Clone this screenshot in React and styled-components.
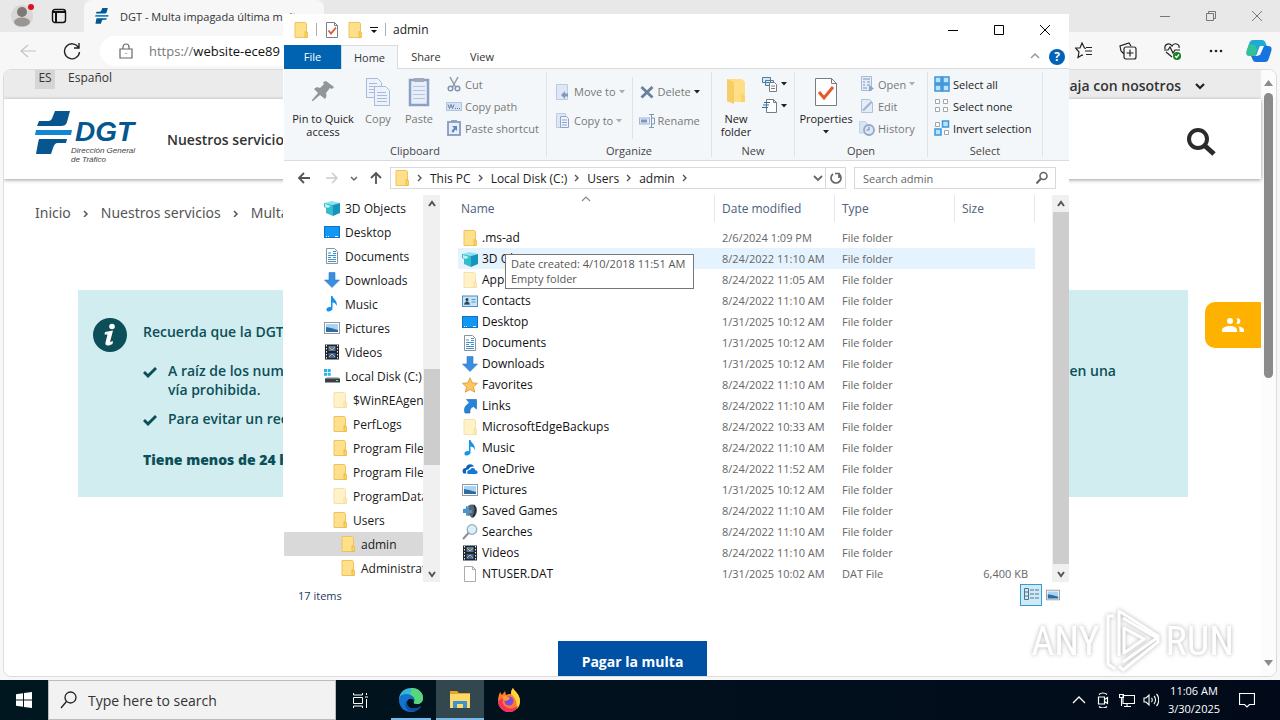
import React from 'react';
import styled, { createGlobalStyle } from 'styled-components';

const quickAccess = [
  { icon: 'cube', label: '3D Objects' },
  { icon: 'desktop', label: 'Desktop' },
  { icon: 'document', label: 'Documents' },
  { icon: 'download', label: 'Downloads' },
  { icon: 'music', label: 'Music' },
  { icon: 'picture', label: 'Pictures' },
  { icon: 'video', label: 'Videos' },
  { icon: 'disk', label: 'Local Disk (C:)' },
  { icon: 'folderPale', label: '$WinREAgent', level: 1 },
  { icon: 'folder', label: 'PerfLogs', level: 1 },
  { icon: 'folder', label: 'Program Files', level: 1 },
  { icon: 'folder', label: 'Program Files (x86)', level: 1 },
  { icon: 'folderPale', label: 'ProgramData', level: 1 },
  { icon: 'folder', label: 'Users', level: 1 },
  { icon: 'folder', label: 'admin', level: 2, selected: true },
  { icon: 'folder', label: 'Administrator', level: 2 },
];

const files = [
  { icon: 'folder', name: '.ms-ad', date: '2/6/2024 1:09 PM' },
  { icon: 'cube', name: '3D Objects', date: '8/24/2022 11:10 AM', hover: true },
  { icon: 'folderPale', name: 'AppData', date: '8/24/2022 11:05 AM' },
  { icon: 'contact', name: 'Contacts', date: '8/24/2022 11:10 AM' },
  { icon: 'desktop', name: 'Desktop', date: '1/31/2025 10:12 AM' },
  { icon: 'document', name: 'Documents', date: '1/31/2025 10:12 AM' },
  { icon: 'download', name: 'Downloads', date: '1/31/2025 10:12 AM' },
  { icon: 'star', name: 'Favorites', date: '8/24/2022 11:10 AM' },
  { icon: 'link', name: 'Links', date: '8/24/2022 11:10 AM' },
  { icon: 'folderPale', name: 'MicrosoftEdgeBackups', date: '8/24/2022 10:33 AM' },
  { icon: 'music', name: 'Music', date: '8/24/2022 11:10 AM' },
  { icon: 'cloud', name: 'OneDrive', date: '8/24/2022 11:52 AM' },
  { icon: 'picture', name: 'Pictures', date: '1/31/2025 10:12 AM' },
  { icon: 'games', name: 'Saved Games', date: '8/24/2022 11:10 AM' },
  { icon: 'search', name: 'Searches', date: '8/24/2022 11:10 AM' },
  { icon: 'video', name: 'Videos', date: '8/24/2022 11:10 AM' },
  { icon: 'blank', name: 'NTUSER.DAT', date: '1/31/2025 10:02 AM', type: 'DAT File', size: '6,400 KB' },
];

const art = {
  folder: (
    <>
      <path d="M2 .5h10.500l1 1v14H2z" fill="#ffe08a" stroke="#efc35a" />
      <path d="M12 9.500l2.500 1v5H12z" fill="#ffd257" stroke="#e8b84a" strokeWidth=".8" />
    </>
  ),
  folderPale: (
    <>
      <path d="M2 .5h10.500l1 1v14H2z" fill="#fff2c8" stroke="#f5e2a8" />
      <path d="M12 9.500l2.500 1v5H12z" fill="#ffedb4" stroke="#f2dc9a" strokeWidth=".8" />
    </>
  ),
  cube: (
    <>
      <path d="M0 3l8-2 8 2-5 3z" fill="#8ce5ee" />
      <path d="M0 3l9 2v11l-7-3V8l-2-1z" fill="#35bccb" />
      <path d="M9 5l7-2v10l-7 3z" fill="#1595bd" />
      <path d="M1 4l6 2-3 2-3-1z" fill="#baf2f5" />
    </>
  ),
  desktop: (
    <>
      <rect x=".5" y="2.500" width="15" height="11" fill="#1297f5" stroke="#0b74c9" />
      <path d="M2 12.500h1M4 12.500h1M11 12.500h3" stroke="#fff" />
    </>
  ),
  document: (
    <>
      <path d="M2.500.5h8l3 3v12h-11z" fill="#fff" stroke="#8a949e" />
      <path d="M4 5h3M9 3.500h3M9 5.500h3M4 7.500h8M4 9.500h3M9 9.500h3M4 11.500h8M4 13.500h8" stroke="#3a92cf" />
    </>
  ),
  download: <path d="M5 .5h6V8h4.500L8 15.500.5 8H5z" fill="#3a8ee0" stroke="#2b78c4" strokeWidth=".6" />,
  music: <path d="M7 0h1.500c.5 3 5.500 4.500 4 10-.5-2.500-2-3.500-4-3.500V13c-1 2.800-5.500 3.500-6 1-.3-2.200 2-3.400 4.500-2.800z" fill="#1493ea" />,
  picture: (
    <>
      <rect x=".5" y="2.500" width="15" height="11" fill="#fff" stroke="#8f99a3" />
      <rect x="2" y="4" width="12" height="8" fill="#a9d4f4" />
      <path d="M2 7l5 1 7 2v2H2z" fill="#2f6da0" />
    </>
  ),
  video: (
    <>
      <rect x="1" y=".5" width="14" height="15" fill="#20262e" />
      <path d="M2.500 1v14M13.500 1v14" stroke="#e8eef2" strokeDasharray="1.500 1.500" />
      <rect x="4.500" y="2" width="7" height="5" fill="#5579a8" />
      <rect x="4.500" y="9" width="7" height="5" fill="#3c63a6" />
      <path d="M5 3l3 3 3-3M5 13l3-3 3 3" stroke="#e0b63c" fill="none" />
    </>
  ),
  disk: (
    <>
      <path d="M0 1h3v3H0zM3.700 1h3v3h-3zM0 4.700h3v3H0zM3.700 4.700h3v3h-3z" fill="#2cb4e8" />
      <path d="M3 9h11l2 2H1z" fill="#b9bec3" />
      <rect x="1" y="10.500" width="15" height="4" fill="#3a3f44" />
      <path d="M12 12.500h2" stroke="#5cf05c" />
    </>
  ),
  contact: (
    <>
      <rect x=".5" y="3" width="15" height="10.500" fill="#c5e4fa" stroke="#4f8fc2" />
      <circle cx="5" cy="6.500" r="1.500" fill="#2f3f4c" />
      <path d="M2.500 11.500c0-4 5-4 5 0zM9.500 6.500h4M9.500 9h4" fill="#2f3f4c" stroke="#4678a0" strokeWidth=".8" />
    </>
  ),
  star: <path d="M8 .8l2.200 5 5.300.5-4 3.700 1.200 5.200L8 12.500l-4.700 2.700L4.500 10l-4-3.700 5.300-.5z" fill="#ffc65c" stroke="#d89438" strokeWidth=".8" />,
  link: <path d="M4.500 1.500h10V11l-3-2.500C8.500 9.500 7.500 12 8 15H3C1.500 10 3.500 7 7.500 5z" fill="#2386d8" stroke="#1767b0" strokeWidth=".6" />,
  cloud: (
    <>
      <path d="M1.500 12.500C-1 9 2 6.500 4 7c.5-4 6-5 8-1.500-3-.5-5 1-5.500 3C3.500 8 3.500 11 4.500 12.500z" fill="#0c62b8" />
      <path d="M6 13c-2-2 0-4.500 2-4 1-3 5-2.500 5.300.2 3 .3 3 3.500.7 3.800z" fill="#1479d6" />
    </>
  ),
  games: (
    <>
      <path d="M6 3c4-3 9-1 9 4 0 4-2 7-5 8l-3-3z" fill="#5c6670" />
      <path d="M1 6l3-.5V3l3 1v3h3v3H7v3l-3-.5V10H1z" fill="#4d94c9" />
      <path d="M12 2c2 4 1 9-1 12" stroke="#22282e" fill="none" strokeWidth="1.500" />
    </>
  ),
  search: (
    <>
      <circle cx="10" cy="5.500" r="4.800" fill="#d9f0fb" stroke="#8da9b8" strokeWidth="1.200" />
      <path d="M6.500 9L1 15" stroke="#8a8f94" strokeWidth="2" />
    </>
  ),
  blank: <path d="M2.500.5h8l3 3v12h-11zM10.500.5v3h3" fill="#fff" stroke="#a9adb0" />,
  checkDoc: (
    <>
      <path d="M2.500.5h8l3 3v12h-11zM10.500.5v3h3" fill="#fff" stroke="#7a7f85" />
      <path d="M4.500 8.500l2.500 3L12 5.500" fill="none" stroke="#e2572f" strokeWidth="1.800" />
    </>
  ),
  cut: (
    <>
      <path d="M4 1l5.500 10M12 1L6.500 11" stroke="#8e9cae" strokeWidth="1.500" fill="none" />
      <circle cx="4.500" cy="12.500" r="2.300" stroke="#8294b2" strokeWidth="1.500" fill="none" />
      <circle cx="11.500" cy="12.500" r="2.300" stroke="#8294b2" strokeWidth="1.500" fill="none" />
    </>
  ),
  copyPath: (
    <>
      <rect x=".5" y="4.500" width="15" height="8" fill="#d5e1f3" stroke="#b3c4df" />
      <path d="M2 6.500l1.500 4 1.500-4 1.500 4L8 6.500M9 10.500h1M11 10.500h1M13 10.500h1" stroke="#667fa8" fill="none" />
    </>
  ),
  shortcut: (
    <>
      <rect x="2" y="2" width="12" height="13" fill="#e8effa" stroke="#849bc4" strokeWidth="1.800" />
      <rect x="5" y="0" width="6" height="3" fill="#8ea3c4" />
      <path d="M6 6h5v5L9.500 9.500 7 13 5.500 11l2.500-3z" fill="#6584bf" />
    </>
  ),
  moveTo: (
    <>
      <path d="M1.500.5h11v15h-11z" fill="#dde7f6" stroke="#bdcbe2" />
      <path d="M6 11l4-4v2.500h3v3h-3V15z" fill="#8397bd" />
    </>
  ),
  copyTo: (
    <>
      <path d="M1.500.5h9v14h-9z" fill="#dde7f6" stroke="#bdcbe2" />
      <path d="M5.500 3.500h6l2 2v9h-8zM7 7h5M7 9.500h5M7 12h5" fill="#eef3fb" stroke="#8fa3c8" />
    </>
  ),
  remove: <path d="M2.500 3l11 10.500M13.500 3l-11 10.500" stroke="#6a7f9c" strokeWidth="2.800" />,
  rename: (
    <>
      <rect x=".5" y="5" width="10" height="6" fill="#dde7f6" stroke="#a4b6d6" />
      <path d="M2 8h6" stroke="#7e95c0" strokeWidth="3" />
      <path d="M10 1.500h5M12.500 1.500v13M10 14.500h5M13 5h2.500v6H13" stroke="#8296b8" fill="none" />
    </>
  ),
  newItem: (
    <>
      <path d="M.5 1.500h8v5h-8zM3.500 4.500h8v5h-8z" fill="#d8e9f6" stroke="#4d7f9d" />
      <path d="M7.500 6.500h5l2 2v7h-7zM9 10h4M9 12.500h4" fill="#fff" stroke="#777c82" />
    </>
  ),
  easyAccess: (
    <>
      <path d="M4.500 1.500h7l3 3v10h-10zM11.500 1.500v3h3" fill="#fff" stroke="#777c82" />
      <path d="M2 4.500h6M1 7h6M0 9.500h6" stroke="#2e6da4" strokeWidth="1.200" />
    </>
  ),
  openDoc: (
    <>
      <path d="M2.500.5h10v14h-10z" fill="#e4ecf8" stroke="#a8b9d6" />
      <path d="M4 3h7M4 6h2M8 6h3M4 9h2M8 9h3M4 12h4" stroke="#7f95c0" />
      <path d="M10 9l5 3.500-5 3z" fill="#8fa3cd" />
    </>
  ),
  edit: (
    <>
      <path d="M2.500 1.500h8l3 3v10h-11z" fill="#e4ecf8" stroke="#b0c0dc" />
      <path d="M4 12.500L12.500 4" stroke="#a0b2d4" strokeWidth="2.200" />
    </>
  ),
  history: (
    <>
      <path d="M.5 1.500h6l1.500 1.500v10H.5z" fill="#d8e3f3" stroke="#c3d1e6" />
      <circle cx="10" cy="10" r="5" fill="#dde7f6" stroke="#93a6ca" strokeWidth="1.800" />
      <path d="M10 7v3H7.500" fill="none" stroke="#6d83ae" />
    </>
  ),
  selectAll: (
    <>
      <path d="M1 1h6v6H1zM9 1h6v6H9zM1 9h6v6H1zM9 9h6v6H9z" fill="#bfe2fb" stroke="#3897e0" strokeWidth="1.500" />
      <path d="M8 0v16M0 8h16" stroke="#2885ce" />
    </>
  ),
  selectNone: <path d="M1.500 1.500h4v4h-4zM9.500 1.500h4v4h-4zM1.500 9.500h4v4h-4zM9.500 9.500h4v4h-4z" fill="#fff" stroke="#a1a6ab" />,
  invert: (
    <>
      <path d="M1.500 2.500h4v4h-4zM10.500 10.500h4v4h-4z" fill="#fff" stroke="#a1a6ab" />
      <path d="M8.500 1h6v6h-6zM1 9h6v6H1z" fill="#bfe2fb" stroke="#3897e0" strokeWidth="1.500" />
    </>
  ),
};

function Icon({ name, size = 16 }) {
  return (
    <svg width={size} height={size} viewBox="0 0 16 16" fill="none" aria-hidden="true">
      {art[name]}
    </svg>
  );
}

function Line({ d, size = 16, color = '#222', width = 1, box = 16 }) {
  return (
    <svg width={size} height={size} viewBox={`0 0 ${box} ${box}`} fill="none" stroke={color} strokeWidth={width} aria-hidden="true">
      <path d={d} />
    </svg>
  );
}

function Caret({ color = '#222' }) {
  return (
    <svg width="6" height="4" viewBox="0 0 6 4" aria-hidden="true">
      <path d="M0 0h6L3 3.500z" fill={color} />
    </svg>
  );
}

function Small({ icon, children, muted, caret }) {
  return (
    <SmallButton $muted={muted}>
      <Icon name={icon} />
      {children}
      {caret && <Caret color={caret === 'dark' ? '#222' : '#a9adb2'} />}
    </SmallButton>
  );
}

function DgtMark({ width, height }) {
  return (
    <svg width={width} height={height} viewBox="0 0 38 44" aria-hidden="true">
      <path d="M20 0h15l-3 11c-1 3-3 4-6 4H2l2-5h9c3 0 4-2 5-5z" fill="#07568f" />
      <path d="M1 19h36l-1 5H0z" fill="#1286d4" />
      <path d="M4 28h28l-1 4h-8c-3 0-4 2-5 5l-2 6H1l2-11z" fill="#07568f" />
    </svg>
  );
}

function Browser() {
  return (
    <BrowserWindow>
      <TabStrip>
        <IconButton aria-label="Profile">
          <svg width="24" height="24" viewBox="0 0 24 24">
            <circle cx="12" cy="12" r="11" fill="#d9d7d5" />
            <circle cx="12" cy="8" r="5" fill="#7d7976" />
            <ellipse cx="12" cy="18" rx="8" ry="4.500" fill="#9b9693" />
            <circle cx="21" cy="3" r="3" fill="#e0101f" />
          </svg>
        </IconButton>
        <IconButton aria-label="Tab actions">
          <svg width="16" height="16" viewBox="0 0 16 16" fill="none" stroke="#111" strokeWidth="1.400">
            <rect x="1.500" y="1.500" width="13" height="13" rx="2.500" />
            <path d="M1.500 4h13M5 4v10" strokeWidth="2" />
          </svg>
        </IconButton>
        <Tab>
          <DgtMark width={14} height={16} />
          DGT - Multa impagada última multa
        </Tab>
        <TabGap />
        <CaptionButton aria-label="Minimize browser"><Line d="M3 8.500h10" color="#777" /></CaptionButton>
        <CaptionButton aria-label="Restore browser">
          <Line d="M3.500 5.500h7v7h-7zM5.500 5.500v-2h7v7h-2" color="#777" />
        </CaptionButton>
        <CaptionButton aria-label="Close browser"><Line d="M3 3l10 10M13 3L3 13" color="#777" /></CaptionButton>
      </TabStrip>

      <Toolbar>
        <ToolButton aria-label="Back"><Line d="M9 3L2 9l7 6M2 9h15" size={18} box={18} color="#c4c4c4" width={1.2} /></ToolButton>
        <ToolButton aria-label="Reload"><Line d="M15.500 5.500A7.500 7.500 0 1 0 16.500 10M16 1v5h-5" size={18} box={18} width={1.400} /></ToolButton>
        <UrlBar>
          <Line d="M2 6h12v9H2zM5 6V4a3 3 0 0 1 6 0v2M7.500 10.500h1" color="#666" width={1.2} />
          <label htmlFor="url">https://</label>
          <input id="url" defaultValue="website-ece89" />
        </UrlBar>
        <ToolButton aria-label="Favorites">
          <Line d="M11 6.500L9.500 6 7 1 5 6H.5l3.500 4L3 15.500 7 13l1 .5M11 5.500h6M10 9h7M11 12.500h6" size={18} box={18} width={1.200} />
        </ToolButton>
        <ToolButton aria-label="Collections">
          <Line d="M5 12L2 9 1 4l9-3 2 3M7 5h8a2 2 0 0 1 2 2v8a2 2 0 0 1-2 2H7a2 2 0 0 1-2-2V7a2 2 0 0 1 2-2M11 7.500v7M7.500 11h7" size={18} box={18} width={1.200} />
        </ToolButton>
        <ToolButton aria-label="Browser essentials">
          <svg width="18" height="18" viewBox="0 0 18 18" fill="none" stroke="#222" strokeWidth="1.200">
            <path d="M9 15L3 10M2 7c-1-5 5-7 7-3 2-4 8-2 7 2M1 8h4l2-3 3 6 2-3h5" />
            <circle cx="14" cy="14" r="4" fill="#18801f" stroke="none" />
            <path d="M12 14l1.500 1.500L16 12.500" stroke="#fff" />
          </svg>
        </ToolButton>
        <ToolButton aria-label="Settings">
          <svg width="18" height="18" viewBox="0 0 18 18" fill="#222">
            <circle cx="4" cy="9" r="1.300" /><circle cx="9" cy="9" r="1.300" /><circle cx="14" cy="9" r="1.300" />
          </svg>
        </ToolButton>
        <ToolButton aria-label="Copilot">
          <svg width="26" height="24" viewBox="0 0 26 24">
            <path d="M7 1h9c2 0 3 1 4 4l1 2h-5c-3 0-3 3-5 8-1 2-2 2-4 2H4c-4 0-4-3-3-6l2-6c1-3 2-4 4-4z" fill="#1fa9d8" />
            <path d="M3 5L1 11c-1 3-1 6 3 6h3c2 0 3-3 4-6L9 6z" fill="#33c298" />
            <path d="M19 23h-9c-2 0-3-1-4-4l-1-2h5c3 0 3-3 5-8 1-2 2-2 4-2h3c4 0 4 3 3 6l-2 6c-1 3-2 4-4 4z" fill="#1674e0" />
            <path d="M11 15l3-8h4l-4 9-4 1z" fill="#fff" />
          </svg>
        </ToolButton>
      </Toolbar>

      <Viewport>
        <Site>
          <TopBand>
            <Lang>ES</Lang>
            <span>Español</span>
            <WorkLink href="#trabaja">
              Trabaja con nosotros
              <Line d="M2 4l4 4 4-4" size={12} box={12} width={2.200} />
            </WorkLink>
          </TopBand>
          <SiteHeader>
            <Logo href="#inicio" aria-label="DGT">
              <DgtMark width={38} height={44} />
              <LogoText>
                <b>DGT</b>
                <small>Dirección General</small>
                <small>de Tráfico</small>
              </LogoText>
            </Logo>
            <ServiceLink href="#servicios">Nuestros servicios</ServiceLink>
            <IconButton aria-label="Buscar">
              <svg width="30" height="30" viewBox="0 0 30 30" fill="none" stroke="#2b2b2b">
                <circle cx="12" cy="12" r="9" strokeWidth="4" />
                <path d="M18 18l10 9" strokeWidth="5" />
              </svg>
            </IconButton>
          </SiteHeader>
          <Crumbs>
            <a href="#inicio">Inicio</a>
            <Line d="M2 2l3 3-3 3" size={8} box={8} color="#555" width={1.500} />
            <a href="#servicios">Nuestros servicios</a>
            <Line d="M2 2l3 3-3 3" size={8} box={8} color="#555" width={1.500} />
            <span>Multas</span>
          </Crumbs>
          <Notice>
            <svg width="34" height="34" viewBox="0 0 34 34" aria-hidden="true">
              <circle cx="17" cy="17" r="17" fill="#0c4f58" />
              <circle cx="19" cy="8.500" r="2.800" fill="#fff" />
              <path d="M12 14l8-1.500-3 11.500 3-1-.5 3c-3 2-8 2.500-7-1.500l2-8h-3z" fill="#fff" />
            </svg>
            <NoticeText>
              <p>Recuerda que la DGT nunca</p>
              <ul>
                <li>
                  <Line d="M1 7l4 4 8-8" size={14} box={14} color="#0c4f58" width={3} />
                  <NoticeItem>
                    <Split><span>A raíz de los numerosos</span><span>en una</span></Split>
                    vía prohibida.
                  </NoticeItem>
                </li>
                <li>
                  <Line d="M1 7l4 4 8-8" size={14} box={14} color="#0c4f58" width={3} />
                  <NoticeItem>Para evitar un recargo</NoticeItem>
                </li>
              </ul>
              <strong>Tiene menos de 24 horas</strong>
            </NoticeText>
          </Notice>
          <PayButton>Pagar la multa</PayButton>
          <PeopleTab aria-label="Atención">
            <svg width="24" height="24" viewBox="0 0 24 24" fill="#fff">
              <path d="M16.500 11a2.900 2.900 0 1 0 0-5.800c-.3 0-.6 0-.9.100a5 5 0 0 1 0 5.500c.3.100.6.200.9.200zM9 11a3 3 0 1 0 0-6 3 3 0 0 0 0 6zM9 13c-3 0-8 1.300-8 4v2h15v-2c0-2.700-4-4-7-4zM17 13.200c1.200.9 1.500 2.300 1.500 3.800v2H23v-2c0-2.300-3.500-3.500-6-3.800z" />
            </svg>
          </PeopleTab>
        </Site>
        <PageScroll>
          <svg width="9" height="6" viewBox="0 0 9 6"><path d="M0 6h9L4.500 0z" fill="#8b8b8b" /></svg>
          <PageThumb />
          <svg width="9" height="6" viewBox="0 0 9 6"><path d="M0 0h9L4.500 6z" fill="#8b8b8b" /></svg>
        </PageScroll>
      </Viewport>
    </BrowserWindow>
  );
}

function Ribbon() {
  return (
    <RibbonBar>
      <Group $width={263}>
        <GroupBody>
          <BigButton $width={74}>
            <svg width="24" height="32" viewBox="0 0 24 32">
              <path d="M15 5l8 6-2 2-2-1-4 5c1 3 0 5-1 6l-5-4-7 6-1 0 0-1 6-7-4-4c2-2 4-2 6-1l4-4-1-2z" fill="#8f9897" />
            </svg>
            Pin to Quick access
          </BigButton>
          <BigButton $width={36} $muted>
            <svg width="26" height="32" viewBox="0 0 26 32" fill="#edf3fc" stroke="#a9b9d6">
              <path d="M1.500 2.500h11l4 4v15h-15z" />
              <path d="M4 7.500h8M4 10.500h8M4 13.500h8M4 16.500h8" />
              <path d="M9.500 10.500h11l4 4v15h-15z" />
              <path d="M12 16.500h9M12 19.500h10M12 22.500h10M12 25.500h10" />
            </svg>
            Copy
          </BigButton>
          <BigButton $width={46} $muted>
            <svg width="22" height="32" viewBox="0 0 22 32">
              <rect x="2" y="4" width="18" height="25" fill="#e7eefa" stroke="#8ba0c6" strokeWidth="2.500" />
              <rect x="6" y="2" width="10" height="4" fill="#a0a9b8" />
              <path d="M5 10.500h12M5 14.500h12M5 18.500h12M5 22.500h12" stroke="#b6c5df" />
            </svg>
            Paste
          </BigButton>
          <SmallStack>
            <Small icon="cut" muted>Cut</Small>
            <Small icon="copyPath" muted>Copy path</Small>
            <Small icon="shortcut" muted>Paste shortcut</Small>
          </SmallStack>
        </GroupBody>
        <GroupName>Clipboard</GroupName>
      </Group>
      <Group $width={165}>
        <GroupBody>
          <SmallStack $tall>
            <Small icon="moveTo" muted caret="light">Move to</Small>
            <Small icon="copyTo" muted caret="light">Copy to</Small>
          </SmallStack>
          <Divider />
          <SmallStack $tall>
            <Small icon="remove" muted caret="dark">Delete</Small>
            <Small icon="rename" muted>Rename</Small>
          </SmallStack>
        </GroupBody>
        <GroupName>Organize</GroupName>
      </Group>
      <Group $width={83}>
        <GroupBody>
          <BigButton $width={44}>
            <svg width="24" height="32" viewBox="0 0 24 32">
              <path d="M3 3h15l3 3v20H3z" fill="#ffdf85" />
              <path d="M3 3l7 3v22l-7-3z" fill="#f6cd66" />
              <path d="M17 17l4 3v6h-4z" fill="#f9d36c" />
            </svg>
            New folder
          </BigButton>
          <SmallStack>
            <Small icon="newItem" caret="dark" />
            <Small icon="easyAccess" caret="dark" />
          </SmallStack>
        </GroupBody>
        <GroupName>New</GroupName>
      </Group>
      <Group $width={133}>
        <GroupBody>
          <BigButton $width={58}>
            <svg width="24" height="32" viewBox="0 0 24 32">
              <path d="M1.500 2.500h16l5 5v22h-21zM17.500 2.500v5h5" fill="#fff" stroke="#777d83" />
              <path d="M5 16l5 6 9-11" fill="none" stroke="#e25b2c" strokeWidth="3" />
            </svg>
            Properties
            <Caret />
          </BigButton>
          <SmallStack>
            <Small icon="openDoc" muted caret="light">Open</Small>
            <Small icon="edit" muted>Edit</Small>
            <Small icon="history" muted>History</Small>
          </SmallStack>
        </GroupBody>
        <GroupName>Open</GroupName>
      </Group>
      <Group $width={115}>
        <GroupBody>
          <SmallStack>
            <Small icon="selectAll">Select all</Small>
            <Small icon="selectNone">Select none</Small>
            <Small icon="invert">Invert selection</Small>
          </SmallStack>
        </GroupBody>
        <GroupName>Select</GroupName>
      </Group>
    </RibbonBar>
  );
}

function Scroller({ before, thumb }) {
  return (
    <ScrollTrack>
      <ScrollArrow aria-label="Scroll up"><Line d="M1 6l3-4 3 4" size={8} box={8} color="#555" width={2} /></ScrollArrow>
      <ScrollSpace $size={before} />
      <ScrollThumb $size={thumb} />
      <ScrollRest />
      <ScrollArrow aria-label="Scroll down"><Line d="M1 2l3 4 3-4" size={8} box={8} color="#555" width={2} /></ScrollArrow>
    </ScrollTrack>
  );
}

function Explorer() {
  return (
    <ExplorerWindow>
      <TitleBar>
        <Icon name="folder" />
        <TitleRule />
        <Icon name="checkDoc" />
        <Icon name="folder" />
        <svg width="8" height="8" viewBox="0 0 8 8" aria-hidden="true">
          <path d="M0 1h8v1H0zM1 4h6L4 7z" fill="#111" />
        </svg>
        <TitleRule />
        <span>admin</span>
        <TabGap />
        <CaptionButton aria-label="Minimize"><Line d="M3 8.500h10" color="#000" /></CaptionButton>
        <CaptionButton aria-label="Maximize"><Line d="M3.500 3.500h9v9h-9z" color="#000" /></CaptionButton>
        <CaptionButton aria-label="Close"><Line d="M3 3l10 10M13 3L3 13" color="#000" /></CaptionButton>
      </TitleBar>
      <RibbonTabs>
        <RibbonTab $kind="file">File</RibbonTab>
        <RibbonTab $kind="active">Home</RibbonTab>
        <RibbonTab>Share</RibbonTab>
        <RibbonTab>View</RibbonTab>
        <TabGap />
        <Line d="M1 6l4-4 4 4" size={10} box={10} color="#999" width={1.500} />
        <Help aria-label="Help">?</Help>
      </RibbonTabs>
      <Ribbon />

      <AddressRow>
        <NavButton aria-label="Back"><Line d="M14 8H3M8 3L3 8l5 5" color="#555" width={1.800} /></NavButton>
        <NavButton aria-label="Forward"><Line d="M2 8h11M8 3l5 5-5 5" color="#ccc" width={1.500} /></NavButton>
        <NavButton aria-label="Recent" $narrow><Line d="M1 3l3 3 3-3" size={8} box={8} color="#666" width={1.500} /></NavButton>
        <NavButton aria-label="Up"><Line d="M8 14V3M3 8l5-5 5 5" color="#555" width={1.800} /></NavButton>
        <PathBox>
          <Icon name="folder" />
          {['This PC', 'Local Disk (C:)', 'Users', 'admin'].map((part) => (
            <React.Fragment key={part}>
              <Line d="M2 1l3 3-3 3" size={8} box={8} color="#555" width={1.400} />
              <span>{part}</span>
            </React.Fragment>
          ))}
          <Line d="M2 1l3 3-3 3" size={8} box={8} color="#555" width={1.400} />
          <TabGap />
          <Line d="M1 3l4 4 4-4" size={10} box={10} color="#666" width={1.800} />
          <Refresh aria-label="Refresh"><Line d="M5 4a5 5 0 1 0 6 0M11 8V3.500H7" color="#666" width={1.700} /></Refresh>
        </PathBox>
        <SearchBox>
          <input aria-label="Search admin" placeholder="Search admin" />
          <svg width="14" height="14" viewBox="0 0 14 14" fill="none" stroke="#666">
            <circle cx="8.500" cy="5" r="3.500" strokeWidth="1.600" />
            <path d="M6 7.500L1.500 12.500" strokeWidth="2" />
          </svg>
        </SearchBox>
      </AddressRow>

      <Panes>
        <Tree>
          {quickAccess.map((item) => (
            <TreeItem key={item.label} $level={item.level || 0} $selected={item.selected}>
              <Icon name={item.icon} />
              <span>{item.label}</span>
            </TreeItem>
          ))}
        </Tree>
        <Scroller before={157} thumb={96} />
        <FileArea>
          <FileTable>
            <colgroup>
              <col width="257" />
              <col width="120" />
              <col width="120" />
              <col width="80" />
            </colgroup>
            <thead>
              <tr>
                <th>
                  Name
                  <SortMark><Line d="M1 6l4-4 4 4" size={10} box={10} color="#888" width={1.200} /></SortMark>
                </th>
                <th>Date modified</th>
                <th>Type</th>
                <th>Size</th>
              </tr>
            </thead>
            <tbody>
              {files.map((file) => (
                <FileRow key={file.name} $hover={file.hover}>
                  <td>
                    <FileName>
                      <Icon name={file.icon} />
                      {file.name}
                    </FileName>
                  </td>
                  <td>{file.date}</td>
                  <td>{file.type || 'File folder'}</td>
                  <td>{file.size}</td>
                </FileRow>
              ))}
            </tbody>
          </FileTable>
          <Tip role="tooltip">
            Date created: 4/10/2018 11:51 AM
            <br />
            Empty folder
          </Tip>
        </FileArea>
        <Scroller before={0} thumb={352} />
      </Panes>

      <StatusBar>
        <span>17 items</span>
        <TabGap />
        <ViewButton $on aria-label="Details view">
          <Line d="M2.500 2.500h4v11h-4zM2.500 6h4M2.500 10h4M8 4h4M13 4h4M8 8h4M13 8h4M8 12h4M13 12h4" size={18} box={18} color="#587284" />
        </ViewButton>
        <ViewButton aria-label="Thumbnail view"><Icon name="picture" size={14} /></ViewButton>
      </StatusBar>
    </ExplorerWindow>
  );
}

function Taskbar() {
  return (
    <TaskRow>
      <TaskButton aria-label="Start">
        <svg width="16" height="16" viewBox="0 0 16 16" fill="#fff">
          <path d="M0 2.200L7 1.200v6.300H0zM8 1.100L16 0v7.500H8zM0 8.500h7v6.300l-7-1zM8 8.500h8V16l-8-1.100z" />
        </svg>
      </TaskButton>
      <TaskSearch>
        <svg width="18" height="18" viewBox="0 0 18 18" fill="none" stroke="#222" strokeWidth="1.300">
          <circle cx="11.500" cy="6.500" r="5.500" />
          <path d="M7.500 10.500L2 17" />
        </svg>
        <input aria-label="Type here to search" placeholder="Type here to search" />
      </TaskSearch>
      <TaskButton aria-label="Task view">
        <Line d="M1.500 1v2h9V1M1.500 5.500h9v6h-9zM1.500 16v-2h9v2M14.500 1v2M14.500 7v9M13 5h3" color="#fff" />
      </TaskButton>
      <AppGroup>
        <AppButton aria-label="Edge" $running>
          <svg width="26" height="26" viewBox="0 0 26 26">
            <path d="M1 13C1 5 7 1 13 1c8 0 12 5 12 10 0 4-3 6-6 6-2 0-4-1-3-2 2-3-1-6-4-6-5 0-7 4-6 8z" fill="#35b8d8" />
            <path d="M13 1c8 0 12 5 12 10 0 4-3 6-6 6-2 0-4-1-3-2 2-3-1-7-5-7 2-1 3-5 2-7z" fill="#5ad67a" />
            <path d="M1 13c0-4 3-6 8-6 5 0 8 4 7 7-1-3-6-3-7 1-1 6 7 9 14 4-2 4-6 6-10 6C6 25 1 20 1 13z" fill="#1573cf" />
            <path d="M9 15c-1 6 7 9 14 4-3 5-8 6-11 5.500C7 22 6 17 9 13z" fill="#0d4fa3" />
          </svg>
        </AppButton>
        <AppButton aria-label="File Explorer" $running $active>
          <svg width="22" height="20" viewBox="0 0 22 20">
            <path d="M1 1h7l2 2h11v6H1z" fill="#e8a620" />
            <path d="M1 4h20v14H1z" fill="#ffd868" />
            <path d="M4 18v-7h14v7h-4v-4H8v4z" fill="#3d93cf" />
          </svg>
        </AppButton>
        <AppButton aria-label="Firefox">
          <svg width="24" height="26" viewBox="0 0 24 26">
            <path d="M3 5l2 3 3-4 1 4c2-1 4-1 5-1 0-3 1-5 2-6 1 3 7 6 7 13 0 6-5 11-11 11S1 20 1 14c0-4 1-6 2-9z" fill="#ff7a2f" />
            <path d="M14 7c0-3 1-5 2-6 1 3 7 6 7 13 0 3-1 6-3 8 0-6-1-11-6-15z" fill="#ffd43b" />
            <path d="M1 14c0 6 5 11 11 11 4 0 8-2 9-6-5 4-12 3-15-2-1-2 0-4 0-6z" fill="#f5325b" />
            <circle cx="12" cy="14" r="4.500" fill="#7a4be0" />
            <path d="M6 9c3-1 4 1 7 2-1 2-3 2-4 3-2 0-3-2-3-5z" fill="#ff9a30" />
          </svg>
        </AppButton>
      </AppGroup>
      <TabGap />
      <TrayButton aria-label="Hidden icons"><Line d="M2 11l6-6 6 6" color="#fff" width={1.300} /></TrayButton>
      <TrayButton aria-label="Meet now">
        <Line d="M3.500 5h6v7h-6zM9.500 7.500l3-2v6l-3-2M4 2.500c2-2 6-2 8 0M4 14.500c2 2 6 2 8 0" color="#fff" width={1.200} />
      </TrayButton>
      <TrayButton aria-label="Network">
        <Line d="M4 3.500h11.500v8H4zM8 11.500v3M5 14.500h7M.5 2.500h4v3h-4zM2.500 6v8" color="#fff" width={1.100} />
      </TrayButton>
      <TrayButton aria-label="Volume">
        <Line d="M1 6h2l3-3v10l-3-3H1zM8.500 6c1 1 1 3 0 4M11 4c2 2 2 6 0 8M13.500 2c3 3 3 9 0 12" color="#fff" width={1.100} />
      </TrayButton>
      <Clock>
        <span>11:06 AM</span>
        <span>3/30/2025</span>
      </Clock>
      <NoteButton aria-label="Notifications"><Line d="M.5 1.500h15v11h-5L8 15l-2.500-2.500h-5z" color="#fff" width={1.200} /></NoteButton>
    </TaskRow>
  );
}

export default function App() {
  return (
    <Desktop>
      <GlobalStyle />
      <Browser />
      <Explorer />
      <Watermark>
        <span>ANY</span>
        <svg width="58" height="66" viewBox="0 0 58 66" fill="none" stroke="#fff" strokeWidth="3" strokeLinejoin="round">
          <path d="M10 8H4v48l7 5M15 48V3l39 25v6L19 62l-4-4" />
          <path d="M19 10l34 20-34 24M20 20l20 11-20 14z" />
        </svg>
        <span>RUN</span>
      </Watermark>
      <Taskbar />
    </Desktop>
  );
}

const GlobalStyle = createGlobalStyle`
  * {
    box-sizing: border-box;
  }

  body {
    margin: 0;
    font-family: 'Open Sans', 'Noto Sans', sans-serif;
    font-size: 12px;
    color: #1a1a1a;
  }

  button, input {
    font: inherit;
    color: inherit;
    border: 0;
    padding: 0;
    background: none;
  }

  input {
    min-width: 0;
    outline: none;
  }

  a {
    color: inherit;
    text-decoration: none;
  }

  svg {
    flex: none;
    display: block;
  }
`;

const Desktop = styled.div`
  position: relative;
  display: flex;
  flex-direction: column;
  height: 100vh;
  overflow: hidden;
`;

const BrowserWindow = styled.div`
  flex: 1;
  min-height: 0;
  display: flex;
  flex-direction: column;
  background: #f7f7f7;
`;

const TabStrip = styled.div`
  display: flex;
  height: 32px;
  padding-left: 10px;
  gap: 17px;
  align-items: center;
  background: #e8e8e8;
`;

const IconButton = styled.button`
  display: flex;
  align-items: center;
`;

const Tab = styled.div`
  display: flex;
  align-items: center;
  gap: 11px;
  align-self: stretch;
  width: 240px;
  padding-left: 11px;
  border-radius: 8px 8px 0 0;
  background: #f7f7f7;
  font-size: 11px;
  color: #333;
  white-space: nowrap;
`;

const TabGap = styled.div`
  flex: 1;
`;

const CaptionButton = styled.button`
  display: flex;
  align-items: center;
  justify-content: center;
  width: 46px;
  height: 30px;

  ${TabStrip} & + & {
    margin-left: -17px;
  }
`;

const Toolbar = styled.div`
  display: flex;
  align-items: center;
  height: 37px;
  padding-left: 6px;
`;

const ToolButton = styled.button`
  display: flex;
  align-items: center;
  justify-content: center;
  width: 44px;
  height: 30px;

  &:last-child {
    width: 42px;
  }
`;

const UrlBar = styled.div`
  flex: 1;
  display: flex;
  align-items: center;
  height: 30px;
  margin-left: 6px;
  padding-left: 18px;
  border-radius: 15px;
  background: #fff;
  font-size: 13px;

  label {
    margin-left: 15px;
    color: #777;
  }

  input {
    flex: 1;
    color: #111;
  }
`;

const Viewport = styled.div`
  flex: 1;
  min-height: 0;
  display: flex;
  margin: 0 3px 3px;
  border: 1px solid #dcdcdc;
  border-radius: 8px;
  background: #fff;
  overflow: hidden;
`;

const Site = styled.main`
  position: relative;
  flex: 1;
  min-width: 0;
  display: flex;
  flex-direction: column;
  font-size: 14px;
`;

const TopBand = styled.div`
  display: flex;
  align-items: flex-start;
  height: 29px;
  flex: none;
  padding: 0 55px 0 31px;
  gap: 13px;
  background: #ebebeb;
  font-size: 12px;
  line-height: 16px;
  color: #333;
`;

const Lang = styled.span`
  width: 20px;
  height: 19px;
  text-align: center;
  background: #d5d5d5;
`;

const WorkLink = styled.a`
  display: flex;
  align-items: center;
  gap: 13px;
  height: 32px;
  margin-left: auto;
  font-size: 14px;
  font-weight: 600;
`;

const SiteHeader = styled.header`
  display: flex;
  align-items: center;
  height: 80px;
  flex: none;
  padding: 0 45px 0 31px;
  background: #fff;
  box-shadow: 0 1px 4px rgba(0, 0, 0, 0.4);

  & > button {
    margin: 5px 0 0 auto;
  }
`;

const Logo = styled.a`
  display: flex;
  align-items: flex-start;
  height: 56px;
  width: 132px;
`;

const LogoText = styled.span`
  display: flex;
  flex-direction: column;
  margin-left: -2px;
  padding-top: 7px;
  font-family: 'Liberation Sans', sans-serif;
  font-style: italic;

  b {
    padding-left: 4px;
    font-size: 28px;
    line-height: 28px;
    color: #07568f;
  }

  small {
    font-size: 8px;
    line-height: 9px;
    color: #444;
    white-space: nowrap;
  }
`;

const ServiceLink = styled.a`
  font-weight: 600;
  color: #333;
`;

const Crumbs = styled.nav`
  display: flex;
  align-items: center;
  gap: 11px;
  padding: 24px 31px 0;
  font-family: 'Noto Sans', sans-serif;
  line-height: 20px;
  color: #555;
`;

const Notice = styled.section`
  display: flex;
  align-items: flex-start;
  gap: 16px;
  margin: 67px 73px 0 74px;
  padding: 28px 15px;
  height: 207px;
  flex: none;
  background: #d2edf0;
  color: #0c4f58;
  font-weight: 600;
  line-height: 19px;
`;

const NoticeText = styled.div`
  flex: 1;

  p {
    margin: 4px 0 20px;
  }

  ul {
    margin: 0 0 22px;
    padding: 0;
    list-style: none;
  }

  li {
    display: flex;
    gap: 11px;
    margin-bottom: 10px;
  }

  li svg {
    margin-top: 4px;
  }
`;

const NoticeItem = styled.div`
  flex: 1;
`;

const Split = styled.div`
  display: flex;
  justify-content: space-between;
  padding-right: 57px;
`;

const PayButton = styled.button`
  align-self: center;
  flex: none;
  width: 149px;
  height: 40px;
  margin-top: 144px;
  background: #0050a4;
  color: #fff;
  font-weight: 700;
`;

const PeopleTab = styled.button`
  position: absolute;
  right: 0;
  top: 232px;
  display: flex;
  align-items: center;
  justify-content: center;
  width: 56px;
  height: 46px;
  border-radius: 10px 0 0 10px;
  background: #ffb100;
`;

const PageScroll = styled.div`
  display: flex;
  flex-direction: column;
  align-items: center;
  width: 15px;
  padding: 10px 0;
  background: #fcfcfc;
`;

const PageThumb = styled.div`
  width: 9px;
  height: 285px;
  margin: 7px 0 auto;
  border-radius: 5px;
  background: #8b8b8b;
`;

const ExplorerWindow = styled.section`
  position: absolute;
  left: 283px;
  top: 14px;
  width: 786px;
  display: flex;
  flex-direction: column;
  padding-left: 1px;
  background: #fff;
`;

const TitleBar = styled.div`
  display: flex;
  align-items: center;
  gap: 7px;
  height: 31px;
  padding: 0 1px 0 9px;

  ${CaptionButton} + ${CaptionButton} {
    margin-left: -7px;
  }
`;

const TitleRule = styled.i`
  width: 1px;
  height: 13px;
  background: #b0b0b0;
`;

const RibbonTabs = styled.div`
  display: flex;
  align-items: center;
  height: 24px;
  padding-right: 4px;
  border-bottom: 1px solid #dadbdc;
  font-size: 11px;
`;

const RibbonTab = styled.button`
  width: ${({ $kind }) => ($kind ? 57 : 56)}px;
  height: 24px;
  color: ${({ $kind }) => ($kind === 'file' ? '#fff' : '#333')};
  background: ${({ $kind }) => ($kind === 'file' ? '#0063b1' : $kind === 'active' ? '#f5f8fb' : 'none')};
  border: ${({ $kind }) => ($kind === 'active' ? '1px solid #dadbdc' : '0')};
  border-bottom: 0;
`;

const Help = styled.button`
  width: 16px;
  height: 16px;
  margin-left: 9px;
  border-radius: 8px;
  background: #0063b8;
  color: #fff;
  font-size: 12px;
  font-weight: 700;
  line-height: 16px;
`;

const RibbonBar = styled.div`
  display: flex;
  height: 92px;
  background: #f4f7fa;
  border-bottom: 1px solid #dadbdc;
  font-size: 11px;
`;

const Group = styled.div`
  display: flex;
  flex-direction: column;
  width: ${({ $width }) => $width}px;
  margin: 3px 0;
  border-right: 1px solid #e0e3e6;
`;

const GroupBody = styled.div`
  display: flex;
  flex: 1;
  padding-left: 2px;
`;

const GroupName = styled.div`
  line-height: 13px;
  text-align: center;
  color: #444;
`;

const BigButton = styled.button`
  display: flex;
  flex: none;
  flex-direction: column;
  align-items: center;
  width: ${({ $width }) => $width}px;
  padding-top: 4px;
  line-height: 13px;
  color: ${({ $muted }) => ($muted ? '#777' : '#222')};

  svg:first-child {
    margin-bottom: 4px;
  }

  svg + svg {
    margin-top: 5px;
  }
`;

const SmallStack = styled.div`
  display: flex;
  flex-direction: column;
  padding: ${({ $tall }) => ($tall ? '5px 6px' : '1px 4px')};

  button {
    height: ${({ $tall }) => ($tall ? 29 : 22)}px;
  }
`;

const SmallButton = styled.button`
  display: flex;
  align-items: center;
  gap: 3px;
  white-space: nowrap;
  color: ${({ $muted }) => ($muted ? '#777' : '#222')};
`;

const Divider = styled.i`
  width: 1px;
  margin: 5px 0 5px 1px;
  background: #e0e3e6;
`;

const AddressRow = styled.div`
  display: flex;
  align-items: center;
  height: 34px;
  padding: 0 13px 0 6px;
`;

const NavButton = styled.button`
  display: flex;
  align-items: center;
  justify-content: center;
  width: ${({ $narrow }) => ($narrow ? 16 : 28)}px;
  height: 22px;
`;

const PathBox = styled.div`
  flex: 1;
  display: flex;
  align-items: center;
  gap: 6px;
  height: 22px;
  padding-left: 3px;
  border: 1px solid #d9d9d9;
  color: #222;
`;

const Refresh = styled.button`
  display: flex;
  align-items: center;
  justify-content: center;
  width: 20px;
  height: 20px;
  margin-left: -4px;
  border-left: 1px solid #d9d9d9;
`;

const SearchBox = styled.div`
  display: flex;
  align-items: center;
  width: 202px;
  height: 22px;
  margin-left: 8px;
  padding: 0 6px 0 8px;
  border: 1px solid #d9d9d9;
  font-size: 11px;

  input {
    flex: 1;
  }

  input::placeholder {
    color: #666;
    opacity: 1;
  }
`;

const Panes = styled.div`
  display: flex;
  height: 387px;
`;

const Tree = styled.div`
  width: 139px;
  overflow: hidden;
`;

const TreeItem = styled.div`
  display: flex;
  align-items: center;
  gap: 5px;
  height: 24px;
  padding-left: ${({ $level }) => 40 + $level * 8}px;
  background: ${({ $selected }) => ($selected ? '#d9d9d9' : 'none')};
  white-space: nowrap;

  &:first-child {
    margin-top: 1px;
  }
`;

const ScrollTrack = styled.div`
  display: flex;
  flex-direction: column;
  width: 17px;
  padding-left: 1px;
  background: #f0f0f0;
`;

const ScrollArrow = styled.button`
  display: flex;
  align-items: center;
  justify-content: center;
  height: 17px;
`;

const ScrollSpace = styled.div`
  height: ${({ $size }) => $size}px;
`;

const ScrollThumb = styled.div`
  height: ${({ $size }) => $size}px;
  background: #cdcdcd;
`;

const ScrollRest = styled.div`
  flex: 1;
`;

const FileArea = styled.div`
  position: relative;
  flex: 1;
  padding-left: 18px;
  overflow: hidden;
`;

const FileTable = styled.table`
  width: 577px;
  table-layout: fixed;
  border-spacing: 0;

  th {
    position: relative;
    height: 27px;
    padding: 0 0 0 7px;
    border-right: 1px solid #e4e8ec;
    text-align: left;
    font-weight: 400;
    color: #4c607a;
  }

  th:first-child {
    padding-left: 3px;
  }

  tbody::before {
    content: '';
    display: block;
    height: 5px;
  }
`;

const SortMark = styled.span`
  position: absolute;
  left: 48%;
  top: 0;
`;

const FileRow = styled.tr`
  background: ${({ $hover }) => ($hover ? '#e5f3ff' : 'none')};

  td {
    height: 21px;
    padding: 0 0 0 7px;
    white-space: nowrap;
    font-size: 11px;
    color: #666;
  }

  td:first-child {
    padding-left: 4px;
    font-size: 12px;
    color: #111;
  }

  td:last-child {
    padding: 0 7px 0 0;
    text-align: right;
  }
`;

const FileName = styled.span`
  display: flex;
  align-items: center;
  gap: 4px;
`;

const Tip = styled.div`
  position: absolute;
  left: 65px;
  top: 59px;
  width: 189px;
  padding: 1px 5px 2px;
  border: 1px solid #767676;
  background: #fff;
  font-size: 11px;
  line-height: 15px;
  color: #575757;
  white-space: nowrap;
`;

const StatusBar = styled.div`
  display: flex;
  align-items: center;
  height: 26px;
  padding: 0 5px 0 14px;
  font-size: 11px;
  color: #1e395b;
`;

const ViewButton = styled.button`
  display: flex;
  align-items: center;
  justify-content: center;
  width: 22px;
  height: 22px;
  border: ${({ $on }) => ($on ? '1px solid #3c9ac9' : '0')};
  background: ${({ $on }) => ($on ? '#cdeafa' : 'none')};
`;

const Watermark = styled.div`
  position: absolute;
  right: 46px;
  bottom: 46px;
  display: flex;
  align-items: center;
  gap: 4px;
  font-family: 'Roboto Condensed', 'Liberation Sans Narrow', sans-serif;
  font-size: 40px;
  color: #fff;
  filter: drop-shadow(0 0 2px rgba(0, 0, 0, 0.3));
`;

const TaskRow = styled.footer`
  display: flex;
  height: 40px;
  background: linear-gradient(90deg, #00171f, #020a1a);
  color: #fff;
`;

const TaskButton = styled.button`
  display: flex;
  align-items: center;
  justify-content: center;
  width: 48px;
`;

const TaskSearch = styled.div`
  display: flex;
  align-items: center;
  gap: 11px;
  width: 288px;
  padding-left: 10px;
  border: 1px solid #b9bcbe;
  background: #f2f2f2;
  font-size: 14px;

  input {
    flex: 1;
  }

  input::placeholder {
    color: #333;
    opacity: 1;
  }
`;

const AppGroup = styled.div`
  display: flex;
  gap: 1px;
  padding-left: 3px;
`;

const AppButton = styled(TaskButton)`
  background-color: ${({ $active }) => ($active ? '#33474f' : 'transparent')};
  background-image: ${({ $running }) => ($running ? 'linear-gradient(#76b9ed, #76b9ed)' : 'none')};
  background-repeat: no-repeat;
  background-position: bottom;
  background-size: ${({ $active }) => ($active ? 48 : 40)}px 2px;
`;

const TrayButton = styled(TaskButton)`
  width: 24px;
`;

const Clock = styled.time`
  display: flex;
  flex-direction: column;
  justify-content: center;
  width: 62px;
  font-size: 11px;
  line-height: 18px;
  text-align: center;
`;

const NoteButton = styled(TaskButton)`
  width: 44px;
  margin-right: 11px;
`;
